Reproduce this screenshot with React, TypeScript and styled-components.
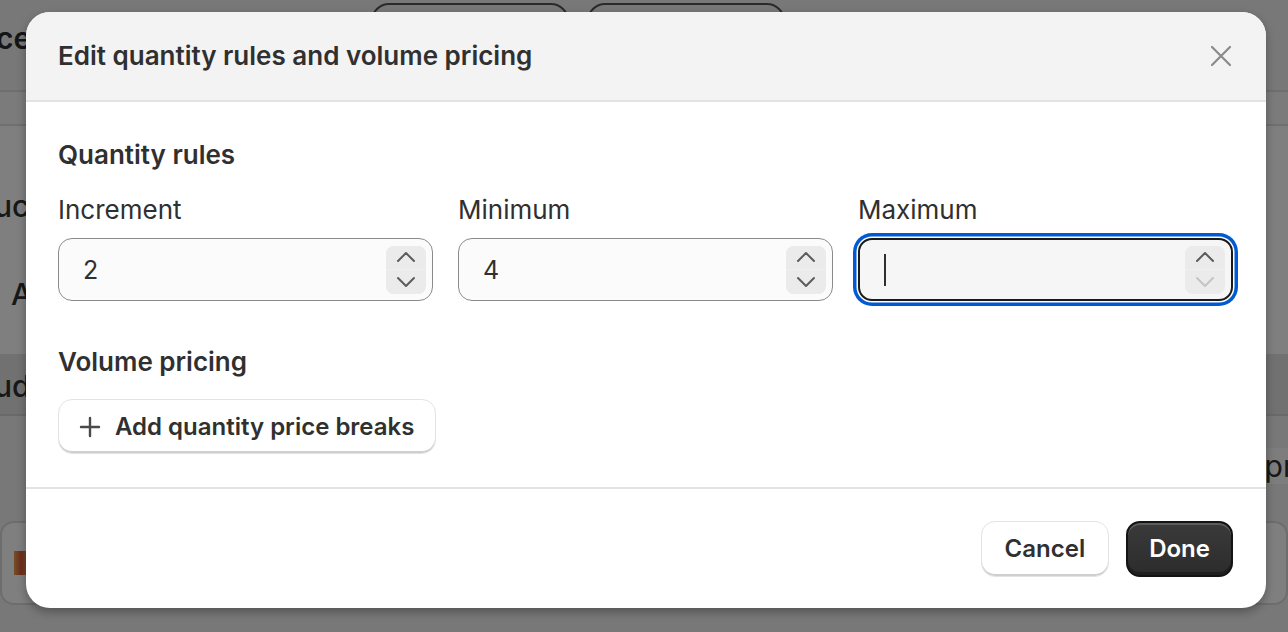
import React from 'react';
import styled, { createGlobalStyle, css } from 'styled-components';

const GlobalStyle = createGlobalStyle`
  html, body {
    margin: 0;
    padding: 0;
  }
  body {
    font-family: Inter, "Noto Sans", sans-serif;
    color: #303030;
    -webkit-font-smoothing: antialiased;
  }
`;

const ChevronUp = () => (
    <svg width="22" height="14" viewBox="0 0 22 14" fill="none">
        <path d="M3 11 L11 3 L19 11" stroke="currentColor" strokeWidth="2" strokeLinecap="round" strokeLinejoin="round" />
    </svg>
);

const ChevronDown = () => (
    <svg width="22" height="14" viewBox="0 0 22 14" fill="none">
        <path d="M3 3 L11 11 L19 3" stroke="currentColor" strokeWidth="2" strokeLinecap="round" strokeLinejoin="round" />
    </svg>
);

const CloseIcon = () => (
    <svg width="22" height="22" viewBox="0 0 22 22" fill="none">
        <path d="M2 2 L20 20 M20 2 L2 20" stroke="currentColor" strokeWidth="2.2" strokeLinecap="round" />
    </svg>
);

const PlusIcon = () => (
    <svg width="22" height="22" viewBox="0 0 22 22" fill="none">
        <path d="M11 2 V20 M2 11 H20" stroke="currentColor" strokeWidth="2.4" strokeLinecap="round" />
    </svg>
);

interface NumberFieldProps {
    label: string;
    value?: string;
    focused?: boolean;
}

const NumberField: React.FC<NumberFieldProps> = ({ label, value, focused }) => (
    <FieldGroup>
        <Label>{label}</Label>
        <FieldBox $focused={focused}>
            <FieldValue>{focused ? <Caret /> : value}</FieldValue>
            <Stepper>
                <StepButton $active>
                    <ChevronUp />
                </StepButton>
                <StepButton $active={!focused}>
                    <ChevronDown />
                </StepButton>
            </Stepper>
        </FieldBox>
    </FieldGroup>
);

const App: React.FC = () => {
    return (
        <>
            <GlobalStyle />
            <Page>
                {/* page behind the modal */}
                <Backdrop>
                    <BgTop>
                        <BgTitle>ce</BgTitle>
                        <BgOutlineButton />
                        <BgOutlineButton />
                    </BgTop>
                    <BgBand />
                    <BgSection>
                        <BgText $top={62}>uc</BgText>
                        <BgText $top={52} $indent={17}>A</BgText>
                    </BgSection>
                    <BgDarkRow>
                        <BgText $top={14}>ude</BgText>
                    </BgDarkRow>
                    <BgRightText>pri</BgRightText>
                    <BgCard>
                        <BgThumb />
                    </BgCard>
                    <BgBottom>
                        <BgDarkButton $width={313} />
                        <BgDarkButton $width={162} />
                    </BgBottom>
                </Backdrop>
                <Overlay>
                    <Modal>
                        <Header>
                            <Title>Edit quantity rules and volume pricing</Title>
                            <CloseButton aria-label="Close">
                                <CloseIcon />
                            </CloseButton>
                        </Header>
                        <Body>
                            <SectionTitle>Quantity rules</SectionTitle>
                            <FieldsRow>
                                <NumberField label="Increment" value="2" />
                                <NumberField label="Minimum" value="4" />
                                <NumberField label="Maximum" focused />
                            </FieldsRow>
                            <SectionTitle $spaced>Volume pricing</SectionTitle>
                            <SecondaryButton $icon>
                                <PlusIcon />
                                <span>Add quantity price breaks</span>
                            </SecondaryButton>
                        </Body>
                        <Footer>
                            <SecondaryButton>Cancel</SecondaryButton>
                            <PrimaryButton>Done</PrimaryButton>
                        </Footer>
                    </Modal>
                </Overlay>
            </Page>
        </>
    );
};

export default App;

// Styled-components

const Page = styled.div`
    position: relative;
    width: 1288px;
    height: 632px;
    overflow: hidden;
    background: #f1f1f1;
`;

const Backdrop = styled.div`
    display: flex;
    flex-direction: column;
    height: 100%;
    & > * {
        flex-shrink: 0;
    }
`;

const BgTop = styled.div`
    display: flex;
    align-items: flex-start;
    gap: 18px;
    height: 90px;
    border-bottom: 2px solid #dcdcdc;
`;

const BgTitle = styled.div`
    width: 357px;
    padding-top: 20px;
    margin-left: -4px;
    font-size: 30px;
    font-weight: 600;
    color: #2a2a2a;
`;

const BgOutlineButton = styled.div`
    width: 194px;
    height: 44px;
    margin-top: 3px;
    border: 2px solid #555;
    border-radius: 18px;
`;

const BgBand = styled.div`
    height: 32px;
    border-bottom: 2px solid #dedede;
    background: #f6f6f6;
`;

const BgSection = styled.div`
    display: flex;
    flex-direction: column;
    height: 228px;
    background: #ffffff;
`;

const BgText = styled.div<{ $top: number; $indent?: number }>`
    margin-top: ${(p) => p.$top}px;
    margin-left: ${(p) => (p.$indent ?? 0) - 6}px;
    font-size: 30px;
    font-weight: 500;
    line-height: 36px;
    color: #303030;
`;

const BgDarkRow = styled.div`
    height: 60px;
    background: #e2e2e2;
    border-bottom: 2px solid #d2d2d2;
`;

const BgRightText = styled.div`
    align-self: flex-end;
    margin-top: 32px;
    margin-right: -14px;
    font-size: 30px;
    line-height: 36px;
    color: #303030;
    background: #fafafa;
    padding-left: 8px;
`;

const BgCard = styled.div`
    display: flex;
    align-items: center;
    height: 80px;
    margin-top: 37px;
    border: 2px solid #dadada;
    border-radius: 14px;
    background: #fff;
    padding-left: 12px;
`;

const BgThumb = styled.div`
    width: 14px;
    height: 24px;
    background: linear-gradient(90deg, #e7a24a, #d9583b 50%, #e7a24a);
`;

const BgBottom = styled.div`
    display: flex;
    justify-content: flex-end;
    gap: 38px;
    margin-top: 28px;
`;

const BgDarkButton = styled.div<{ $width: number }>`
    width: ${(p) => p.$width}px;
    height: 30px;
    border-radius: 10px;
    background: #2a2a2a;
`;

const Overlay = styled.div`
    position: absolute;
    inset: 0;
    display: flex;
    align-items: flex-start;
    padding: 12px 0 0 26px;
    background: rgba(0, 0, 0, 0.5);
`;

const Modal = styled.div`
    display: flex;
    flex-direction: column;
    width: 1240px;
    height: 596px;
    background: #ffffff;
    border-radius: 24px;
    overflow: hidden;
    box-shadow: 0 4px 10px rgba(0, 0, 0, 0.3);
`;

const Header = styled.div`
    display: flex;
    align-items: center;
    justify-content: space-between;
    height: 88px;
    padding: 0 33px 0 32px;
    background: #f3f3f3;
    border-bottom: 2px solid #e3e3e3;
    flex-shrink: 0;
`;

const Title = styled.h2`
    margin: 0;
    font-size: 26px;
    font-weight: 600;
    line-height: 32px;
    color: #303030;
`;

const CloseButton = styled.button`
    display: flex;
    align-items: center;
    justify-content: center;
    width: 24px;
    height: 24px;
    padding: 0;
    border: none;
    background: none;
    color: #8a8a8a;
    cursor: pointer;
`;

const Body = styled.div`
    display: flex;
    flex-direction: column;
    align-items: flex-start;
    padding: 37px 32px 33px;
    border-bottom: 2px solid #e3e3e3;
`;

const SectionTitle = styled.h3<{ $spaced?: boolean }>`
    margin: ${(p) => (p.$spaced ? '45px 0 21px' : '0 0 23px')};
    font-size: 26px;
    font-weight: 600;
    line-height: 32px;
    color: #303030;
`;

const FieldsRow = styled.div`
    display: grid;
    grid-template-columns: repeat(3, 375px);
    gap: 25px;
`;

const FieldGroup = styled.div`
    display: flex;
    flex-direction: column;
    gap: 12px;
`;

const Label = styled.label`
    font-size: 26px;
    line-height: 32px;
    color: #303030;
`;

const FieldBox = styled.div<{ $focused?: boolean }>`
    display: flex;
    align-items: center;
    box-sizing: border-box;
    height: 63px;
    padding: 0 6px 0 24px;
    border-radius: 14px;
    background: #fbfbfb;
    border: 1.5px solid #8a8a8a;
    ${(p) =>
        p.$focused &&
        css`
            background: #f6f6f6;
            border: 2px solid #1a1a1a;
            box-shadow: 0 0 0 1.5px #ffffff, 0 0 0 5px #005bd3;
        `}
`;

const FieldValue = styled.div`
    flex: 1;
    display: flex;
    align-items: center;
    font-size: 25px;
    line-height: 32px;
    color: #303030;
`;

const Caret = styled.span`
    display: block;
    width: 2px;
    height: 32px;
    background: #303030;
`;

const Stepper = styled.div`
    display: flex;
    flex-direction: column;
    width: 40px;
    height: 48px;
    border-radius: 8px;
    overflow: hidden;
    background: #efefef;
    gap: 1px;
`;

const StepButton = styled.div<{ $active?: boolean }>`
    flex: 1;
    display: flex;
    align-items: center;
    justify-content: center;
    background: #ebebeb;
    color: ${(p) => (p.$active ? '#5c5c5c' : '#c4c4c4')};
`;

const ButtonBase = css`
    display: inline-flex;
    align-items: center;
    justify-content: center;
    box-sizing: border-box;
    height: 55px;
    border-radius: 14px;
    font-family: Inter, "Noto Sans", sans-serif;
    font-size: 24px;
    font-weight: 600;
    line-height: 32px;
    cursor: pointer;
`;

const SecondaryButton = styled.button<{ $icon?: boolean }>`
    ${ButtonBase}
    gap: 14px;
    padding: ${(p) => (p.$icon ? '0 21px 0 20px' : '0 23px')};
    height: ${(p) => (p.$icon ? '55px' : '56px')};
    background: #ffffff;
    color: #303030;
    border: 1.5px solid #e3e3e3;
    box-shadow: inset 0 -2px 0 #cfcfcf;
    svg {
        color: #4a4a4a;
    }
`;

const PrimaryButton = styled.button`
    ${ButtonBase}
    height: 56px;
    padding: 0 21px;
    background: linear-gradient(#3a3a3a, #2c2c2c);
    color: #ffffff;
    border: 2px solid #141414;
    box-shadow: inset 0 2px 0 rgba(255, 255, 255, 0.18), inset 0 -3px 0 #202020;
`;

const Footer = styled.div`
    display: flex;
    justify-content: flex-end;
    align-items: center;
    gap: 17px;
    padding: 32px 33px 0;
`;
